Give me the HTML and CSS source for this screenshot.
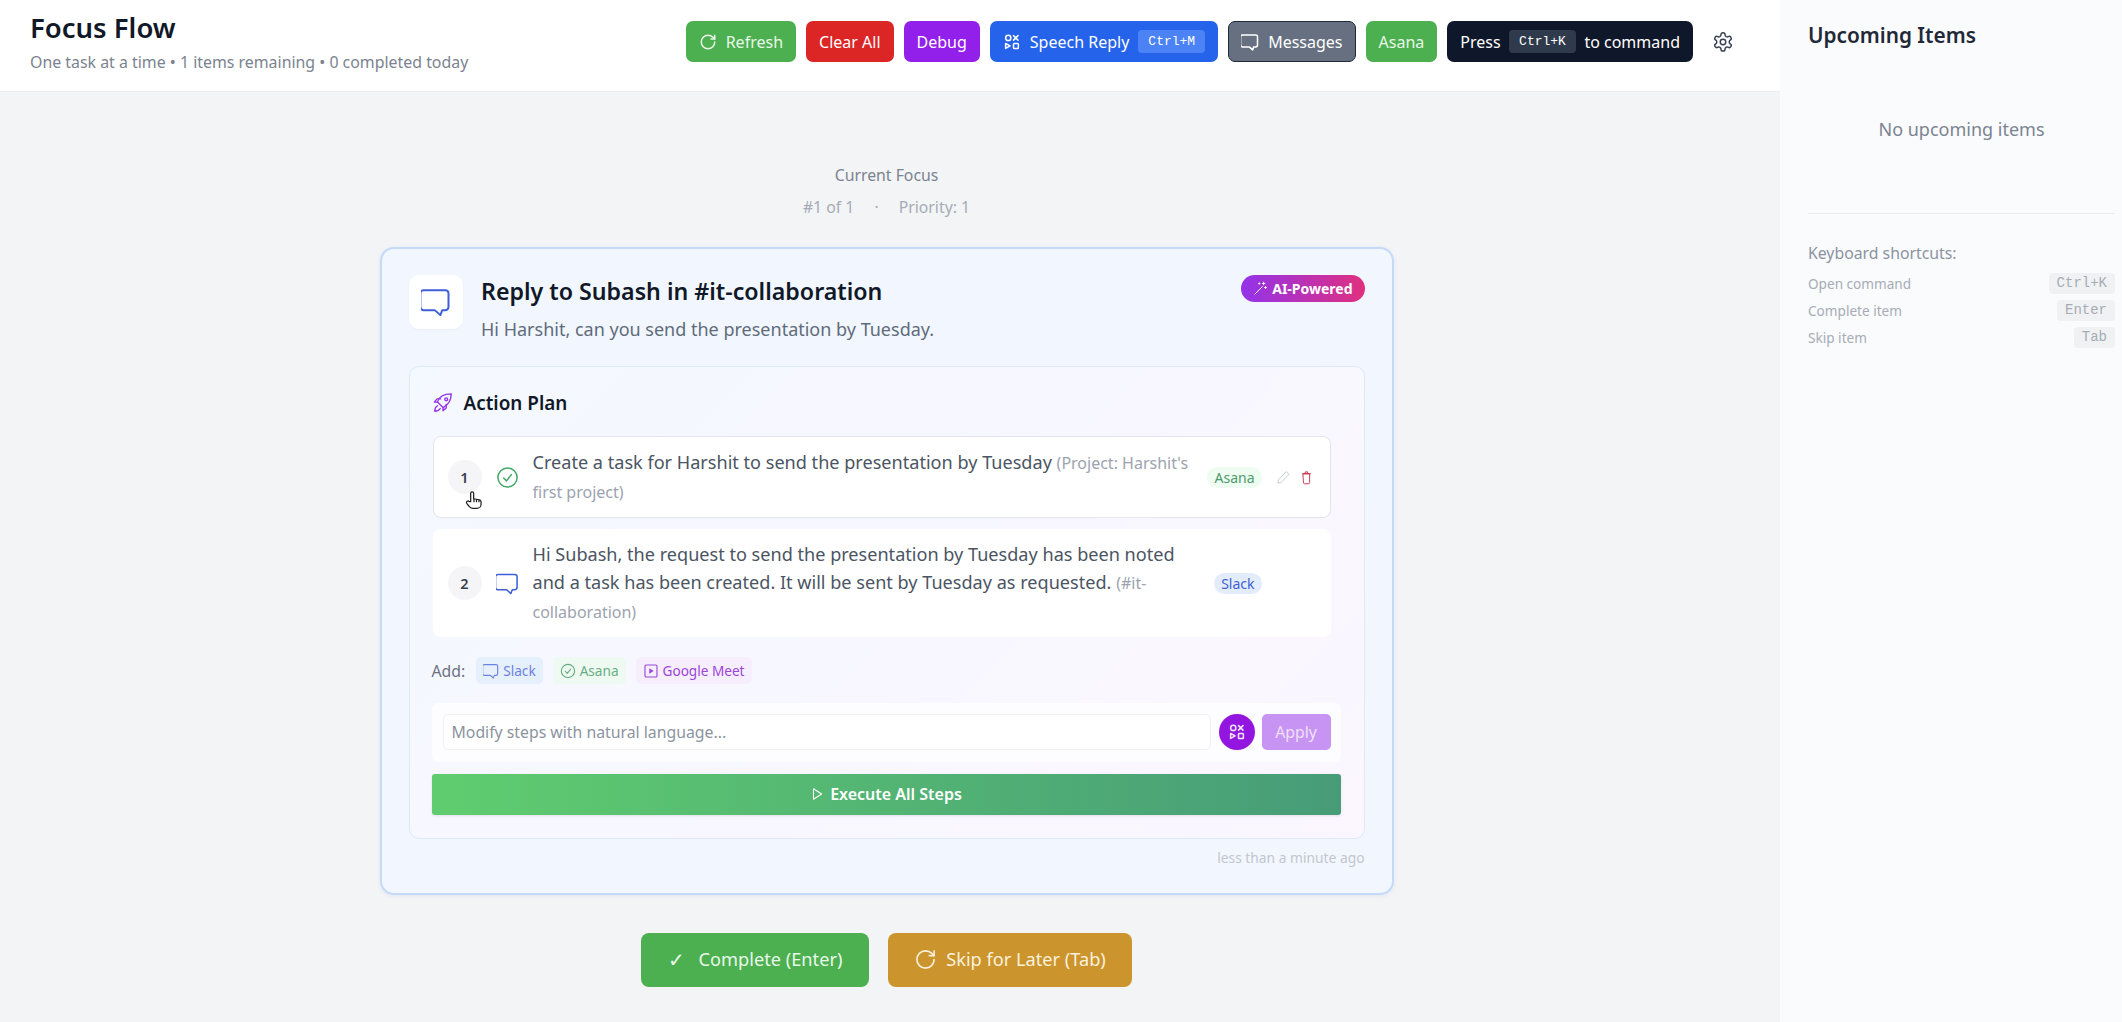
FILE: index.html
```html
<!DOCTYPE html>
<html lang="en">
<head>
  <meta charset="UTF-8" />
  <meta name="viewport" content="width=device-width, initial-scale=1.0"/>
  <title>Focus Flow</title>
  <link rel="stylesheet" href="styles.css">
</head>
<body>
  <svg class="icon-defs" aria-hidden="true">
    <symbol id="i-refresh" viewBox="0 0 24 24"><path d="M21 12a9 9 0 1 1-9-9c2.500 0 4.900 1 6.700 2.700L21 8"/><path d="M21 3v5h-5"/></symbol>
    <symbol id="i-shapes" viewBox="0 0 24 24"><circle cx="7" cy="6.500" r="3.500"/><path d="M14 3.500l6 6M20 3.500l-6 6"/><path d="M3.500 20.500V14l6 3.200z"/><rect x="14" y="14" width="6.500" height="6.500" rx="1"/></symbol>
    <symbol id="i-chat" viewBox="0 0 24 24"><path d="M4.500 2.500h15a2.500 2.500 0 0 1 2.500 2.500v11a2.500 2.500 0 0 1-2.500 2.500h-2.500l-1.500 4-4.500-4h-9a2.500 2.500 0 0 1-2.500-2.500v-11a2.500 2.500 0 0 1 2.500-2.500z"/></symbol>
    <symbol id="i-gear" viewBox="0 0 24 24"><path d="M12.200 2h-.4a2 2 0 0 0-2 2v.2a2 2 0 0 1-1 1.700l-.4.300a2 2 0 0 1-2 0l-.2-.1a2 2 0 0 0-2.700.7l-.2.400a2 2 0 0 0 .7 2.700l.2.100a2 2 0 0 1 1 1.700v.5a2 2 0 0 1-1 1.700l-.2.100a2 2 0 0 0-.7 2.700l.2.400a2 2 0 0 0 2.700.7l.2-.1a2 2 0 0 1 2 0l.4.300a2 2 0 0 1 1 1.700v.2a2 2 0 0 0 2 2h.4a2 2 0 0 0 2-2v-.2a2 2 0 0 1 1-1.700l.4-.3a2 2 0 0 1 2 0l.2.100a2 2 0 0 0 2.700-.7l.2-.4a2 2 0 0 0-.7-2.700l-.2-.1a2 2 0 0 1-1-1.700v-.5a2 2 0 0 1 1-1.700l.2-.1a2 2 0 0 0 .7-2.700l-.2-.4a2 2 0 0 0-2.700-.7l-.2.100a2 2 0 0 1-2 0l-.4-.3a2 2 0 0 1-1-1.700v-.2a2 2 0 0 0-2-2z"/><circle cx="12" cy="12" r="3"/></symbol>
    <symbol id="i-wand" viewBox="0 0 24 24"><path d="M3 21L15 9"/><path d="M17 2v4M15 4h4M20 9v3M18.500 10.500h3M10 3v2M9 4h2"/></symbol>
    <symbol id="i-rocket" viewBox="0 0 24 24"><path d="M9 14l-3-3c1-4 5-9 15-9 0 9-5 13-9 15z"/><path d="M6 11H2.500l3-3.500h4M12 17v3.500l3.500-3v-4"/><circle cx="15.500" cy="8" r="1.600"/><path d="M6 15c-2 1-3 3-3 6 3 0 5-1 6-3"/></symbol>
    <symbol id="i-check" viewBox="0 0 24 24"><circle cx="12" cy="12" r="10"/><path d="M8 12.500l3 3 5-6.500"/></symbol>
    <symbol id="i-pencil" viewBox="0 0 24 24"><path d="M17 3l4 4L8 20l-5 1 1-5z"/></symbol>
    <symbol id="i-trash" viewBox="0 0 24 24"><path d="M7 6h10v14a2 2 0 0 1-2 2H9a2 2 0 0 1-2-2zM5.500 6h13M10 6V3h4v3"/></symbol>
    <symbol id="i-meet" viewBox="0 0 24 24"><rect x="3" y="3" width="18" height="18" rx="2"/><path class="solid" d="M9.500 8l6.500 4-6.500 4z"/></symbol>
    <symbol id="i-play" viewBox="0 0 24 24"><path d="M6 3l14 9-14 9z"/></symbol>
    <symbol id="i-hand" viewBox="0 0 24 24"><path d="M8 14V4a1.800 1.800 0 0 1 3.600 0v6.500l6.400 1.200a3 3 0 0 1 2.500 3V17a5 5 0 0 1-5 5h-5c-2 0-3.500-1-4.500-2.500L3.300 16a1.800 1.800 0 0 1 3-2z"/><path d="M12 11v3M15 11.500V14M18 12v2"/></symbol>
  </svg>

  <div class="app">
    <div class="main">
      <header class="topbar">
        <div class="brand">
          <h1>Focus Flow</h1>
          <p>One task at a time • 1 items remaining • 0 completed today</p>
        </div>
        <div class="toolbar">
          <button class="btn btn-green"><svg class="ico"><use href="#i-refresh"/></svg>Refresh</button>
          <button class="btn btn-red">Clear All</button>
          <button class="btn btn-purple">Debug</button>
          <button class="btn btn-blue"><svg class="ico"><use href="#i-shapes"/></svg>Speech Reply<kbd class="btn-key key-blue">Ctrl+M</kbd></button>
          <button class="btn btn-gray"><svg class="ico"><use href="#i-chat"/></svg>Messages</button>
          <button class="btn btn-green">Asana</button>
          <button class="btn btn-dark">Press<kbd class="btn-key key-dark">Ctrl+K</kbd>to command</button>
          <svg class="ico gear"><use href="#i-gear"/></svg>
        </div>
      </header>

      <main class="focus">
        <div class="focus-label">Current Focus</div>
        <div class="focus-meta"><span>#1 of 1</span><span>·</span><span>Priority: 1</span></div>

        <section class="card">
          <div class="card-head">
            <div class="card-icon"><svg class="ico ico-blue"><use href="#i-chat"/></svg></div>
            <div class="card-title">
              <h2>Reply to Subash in #it-collaboration</h2>
              <p>Hi Harshit, can you send the presentation by Tuesday.</p>
            </div>
            <span class="ai-badge"><svg class="ico"><use href="#i-wand"/></svg>AI-Powered</span>
          </div>

          <div class="plan">
            <h3><svg class="ico ico-violet"><use href="#i-rocket"/></svg>Action Plan</h3>

            <div class="step step-first">
              <span class="step-num">1</span>
              <svg class="ico step-ico ico-green"><use href="#i-check"/></svg>
              <div class="step-text">Create a task for Harshit to send the presentation by Tuesday <small>(Project: Harshit's first project)</small></div>
              <div class="step-side">
                <div class="tag-slot"><span class="tag tag-green">Asana</span></div>
                <svg class="ico mini ico-grey"><use href="#i-pencil"/></svg>
                <svg class="ico mini ico-red"><use href="#i-trash"/></svg>
              </div>
              <svg class="ico cursor"><use href="#i-hand"/></svg>
            </div>

            <div class="step">
              <span class="step-num">2</span>
              <svg class="ico step-ico ico-blue"><use href="#i-chat"/></svg>
              <div class="step-text">Hi Subash, the request to send the presentation by Tuesday has been noted and a task has been created. It will be sent by Tuesday as requested. <small>(#it-collaboration)</small></div>
              <div class="step-side">
                <div class="tag-slot"><span class="tag tag-blue">Slack</span></div>
              </div>
            </div>

            <div class="add-row">
              <span class="add-label">Add:</span>
              <span class="tag-add add-blue"><svg class="ico"><use href="#i-chat"/></svg>Slack</span>
              <span class="tag-add add-green"><svg class="ico"><use href="#i-check"/></svg>Asana</span>
              <span class="tag-add add-violet"><svg class="ico"><use href="#i-meet"/></svg>Google Meet</span>
            </div>

            <div class="modify">
              <input class="modify-input" type="text" placeholder="Modify steps with natural language...">
              <span class="voice"><svg class="ico"><use href="#i-shapes"/></svg></span>
              <button class="apply">Apply</button>
            </div>

            <button class="execute"><svg class="ico"><use href="#i-play"/></svg>Execute All Steps</button>
          </div>

          <div class="card-time">less than a minute ago</div>
        </section>

        <div class="actions">
          <button class="action action-green"><span class="tick">✓</span>Complete (Enter)</button>
          <button class="action action-amber"><svg class="ico"><use href="#i-refresh"/></svg>Skip for Later (Tab)</button>
        </div>
      </main>
    </div>

    <aside class="sidebar">
      <h2>Upcoming Items</h2>
      <div class="empty">No upcoming items</div>
      <div class="shortcuts">
        <h4>Keyboard shortcuts:</h4>
        <div class="shortcut"><span>Open command</span><kbd>Ctrl+K</kbd></div>
        <div class="shortcut"><span>Complete item</span><kbd>Enter</kbd></div>
        <div class="shortcut"><span>Skip item</span><kbd>Tab</kbd></div>
      </div>
    </aside>
  </div>
</body>
</html>
```

FILE: styles.css
```css
* {
  box-sizing: border-box;
}

html, body {
  height: 100%;
}

body {
  margin: 0;
  font-family: "Noto Sans", "Open Sans", sans-serif;
  color: #111827;
  background: #f3f4f6;
  overflow: hidden;
}

button {
  font-family: inherit;
  border: 0;
}

.icon-defs {
  position: absolute;
  width: 0;
  height: 0;
}

.ico {
  width: 18px;
  height: 18px;
  flex: none;
  fill: none;
  stroke: currentColor;
  stroke-width: 2;
  stroke-linecap: round;
  stroke-linejoin: round;
}

.ico-blue { color: #3f5fd8; }
.ico-green { color: #43a868; }
.ico-violet { color: #9333ea; }
.ico-grey { color: #c4c8cf; }
.ico-red { color: #c9324c; }

.app {
  display: flex;
  height: 1022px;
}

.main {
  width: 1780px;
  flex: none;
}

/* top bar */
.topbar {
  height: 92px;
  padding: 0 46px 8px 30px;
  background: #fff;
  border-bottom: 1px solid #eceef1;
  display: flex;
  align-items: center;
  justify-content: space-between;
}

.brand h1 {
  margin: 0;
  font-size: 27.500px;
  line-height: 32px;
  font-weight: 600;
}

.brand p {
  margin: 8px 0 0;
  font-size: 15.900px;
  line-height: 20px;
  color: #7b8390;
}

.toolbar {
  display: flex;
  align-items: center;
  gap: 10px;
}

.btn {
  height: 41px;
  padding: 0 13px;
  border-radius: 7px;
  color: #fff;
  font-size: 16px;
  display: flex;
  align-items: center;
  gap: 9px;
  white-space: nowrap;
}

.btn-green { background: #4caf50; color: #e8f7e8; }
.btn-red { background: #dc2626; }
.btn-purple { background: #9320ea; }
.btn-blue { background: #2563eb; }
.btn-gray { background: #667080; border: 1px solid #1f2937; padding: 0 12px; }
.btn-dark { background: #0f172a; gap: 8.500px; }

.btn-key {
  font-family: "Liberation Mono", monospace;
  font-size: 13px;
  padding: 4px 10px;
  border-radius: 4px;
}

.key-blue { background: #4b82f5; }
.key-dark { background: #2f3a4c; }

.gear {
  width: 22px;
  height: 22px;
  margin-left: 9px;
  color: #374151;
  stroke-width: 1.600;
}

/* centre column */
.focus {
  display: flex;
  flex-direction: column;
  align-items: center;
  padding: 71px 7px 0 0;
}

.focus-label {
  font-size: 15.800px;
  line-height: 24px;
  color: #7b8390;
}

.focus-meta {
  margin-top: 8px;
  font-size: 15.800px;
  line-height: 24px;
  color: #a6acb6;
  display: flex;
  gap: 20px;
}

.card {
  width: 1014px;
  height: 648px;
  margin-top: 28px;
  padding: 26px 27px 0;
  background: #f2f7ff;
  border: 2px solid #c3daf8;
  border-radius: 14px;
  box-shadow: 0 1px 4px rgba(30, 64, 175, 0.08);
}

.card-head {
  display: flex;
  gap: 18.500px;
  height: 91px;
}

.card-icon {
  width: 54px;
  height: 54px;
  flex: none;
  background: #fff;
  border-radius: 10px;
  display: flex;
  align-items: center;
  justify-content: center;
  box-shadow: 0 1px 2px rgba(0, 0, 0, 0.03);
}

.card-icon .ico {
  width: 30px;
  height: 30px;
  stroke-width: 1.600;
}

.card-title {
  flex: 1;
}

.card-title h2 {
  margin: 0;
  font-size: 23.200px;
  line-height: 32px;
  font-weight: 600;
}

.card-title p {
  margin: 10px 0 0;
  font-size: 18px;
  line-height: 24px;
  color: #5f6b7a;
}

.ai-badge {
  height: 27px;
  padding: 0 12px;
  border-radius: 14px;
  background: linear-gradient(to right, #9333ea, #e0307f);
  color: #fff;
  font-size: 14px;
  font-weight: 700;
  display: flex;
  align-items: center;
  gap: 4px;
}

.ai-badge .ico {
  width: 15px;
  height: 15px;
  stroke-width: 1.500;
}

/* action plan */
.plan {
  height: 473px;
  padding: 21px 22px 0;
  background: linear-gradient(135deg, #f4f8ff, #fbf6ff);
  border: 1px solid #dde9fb;
  border-radius: 10px;
}

.plan h3 {
  margin: 0 0 18px;
  font-size: 18.900px;
  line-height: 30px;
  font-weight: 600;
  display: flex;
  align-items: center;
  gap: 10px;
}

.plan h3 .ico {
  width: 22px;
  height: 22px;
  stroke-width: 1.500;
}

.step {
  position: relative;
  width: 898px;
  min-height: 108px;
  margin: 0 0 11px 1px;
  padding: 0 15px;
  background: #fff;
  border-radius: 8px;
  display: flex;
  align-items: center;
}

.step-first {
  min-height: 82px;
  padding-left: 14px;
  border: 1px solid #e2e5ea;
}

.step-num {
  width: 34px;
  height: 34px;
  border-radius: 50%;
  background: #f5f5f7;
  color: #374151;
  font-size: 14.500px;
  font-weight: 600;
  display: flex;
  align-items: center;
  justify-content: center;
  flex: none;
}

.step-ico {
  width: 23px;
  height: 23px;
  margin: 0 14px 0 14px;
  stroke-width: 1.600;
}

.step-text {
  width: 660px;
  font-size: 18.100px;
  line-height: 28px;
  color: #4b5563;
}

.step-text small {
  font-size: 16px;
  color: #9ca3af;
}

.step-side {
  display: flex;
  align-items: center;
  gap: 8px;
  margin-left: 15px;
}

.tag-slot {
  width: 54px;
  margin-right: 6px;
  display: flex;
  justify-content: flex-end;
}

.mini {
  width: 15px;
  height: 15px;
  stroke-width: 1.500;
}

.tag {
  height: 21px;
  padding: 0 7px;
  border-radius: 11px;
  font-size: 14px;
  display: flex;
  align-items: center;
}

.tag-green { background: #eefcf1; color: #4f9b6c; }
.tag-blue { background: #e3ecfb; color: #3f5fd8; }

.cursor {
  position: absolute;
  left: 30px;
  top: 53px;
  width: 20px;
  height: 20px;
  color: #222;
  fill: #fff;
  stroke-width: 1.500;
}

.add-row {
  display: flex;
  align-items: center;
  gap: 10px;
  height: 27px;
  margin-top: 20px;
  font-size: 15.800px;
  color: #6b7280;
}

.add-label {
  margin-right: 1px;
}

.tag-add {
  height: 27px;
  padding: 0 7px;
  border-radius: 5px;
  font-size: 13.600px;
  display: flex;
  align-items: center;
  gap: 4px;
}

.tag-add .ico {
  width: 16px;
  height: 16px;
  stroke-width: 1.700;
}

.add-blue { background: #e6effc; color: #6b82e0; }
.add-green { background: #eefaf1; color: #68ad84; }
.add-violet { background: #f7eefd; color: #9a45d8; }

.solid {
  fill: currentColor;
  stroke: none;
}

.modify {
  width: 909px;
  height: 59px;
  margin-top: 19px;
  padding: 0 10px 2px 11px;
  background: #fdfdff;
  border-radius: 6px;
  display: flex;
  align-items: center;
}

.modify-input {
  flex: 1;
  height: 36px;
  padding: 0 8px;
  border: 1px solid #eef0f3;
  border-radius: 5px;
  background: #fff;
  font-family: inherit;
  font-size: 15.800px;
  outline: 0;
}

.modify-input::placeholder {
  color: #8b93a0;
}

.voice {
  width: 36px;
  height: 36px;
  margin: 0 7px 0 8px;
  border-radius: 50%;
  background: #9316e0;
  color: #f3e6fd;
  display: flex;
  align-items: center;
  justify-content: center;
}

.apply {
  width: 69px;
  height: 36px;
  border-radius: 5px;
  background: #c894f3;
  color: #efe0fc;
  font-size: 15.800px;
}

.execute {
  width: 909px;
  height: 41px;
  margin-top: 12px;
  padding: 0 0 2px;
  border-radius: 3px;
  background: linear-gradient(to right, #5fcd6f, #479c78);
  color: #fff;
  font-size: 16px;
  font-weight: 600;
  display: flex;
  align-items: center;
  justify-content: center;
  gap: 6px;
  box-shadow: 0 1px 3px rgba(0, 0, 0, 0.1);
}

.execute .ico {
  width: 14px;
  height: 14px;
  stroke-width: 1.800;
}

.card-time {
  margin-top: 7px;
  text-align: right;
  font-size: 13.800px;
  line-height: 24px;
  color: #c2c6cd;
}

.actions {
  display: flex;
  gap: 19px;
  margin-top: 38px;
}

.action {
  height: 54px;
  padding: 0 0 2px;
  border-radius: 8px;
  color: #fff;
  font-size: 18.200px;
  display: flex;
  align-items: center;
  justify-content: center;
  gap: 9px;
}

.action-green { width: 228px; background: #4caf50; color: #e9f8ea; }
.action-amber { width: 244px; background: #cb942d; color: #fbf1dc; }

.action .ico {
  width: 23px;
  height: 23px;
  stroke-width: 1.700;
}

.tick {
  font-size: 20px;
  margin-right: 5px;
}

/* sidebar */
.sidebar {
  flex: 1;
  padding: 19px 7px 0 28px;
  background: #fafbfd;
}

.sidebar h2 {
  margin: 0;
  font-size: 20.800px;
  line-height: 32px;
  font-weight: 600;
  color: #1f2937;
}

.empty {
  margin-top: 66px;
  padding-bottom: 72px;
  text-align: center;
  font-size: 18px;
  line-height: 24px;
  color: #7b8390;
  border-bottom: 1px solid #e9ebef;
}

.shortcuts {
  padding-top: 28px;
}

.shortcuts h4 {
  margin: 0 0 6px;
  font-size: 15.800px;
  line-height: 22px;
  font-weight: 400;
  color: #8b93a0;
}

.shortcut {
  display: flex;
  justify-content: space-between;
  align-items: center;
  height: 27px;
  font-size: 13.600px;
  color: #a6acb6;
}

.shortcut kbd {
  height: 21px;
  padding: 0 8px;
  border-radius: 4px;
  background: #f0f1f3;
  font-family: "Liberation Mono", monospace;
  font-size: 14px;
  line-height: 21px;
  color: #a6acb6;
}
```
